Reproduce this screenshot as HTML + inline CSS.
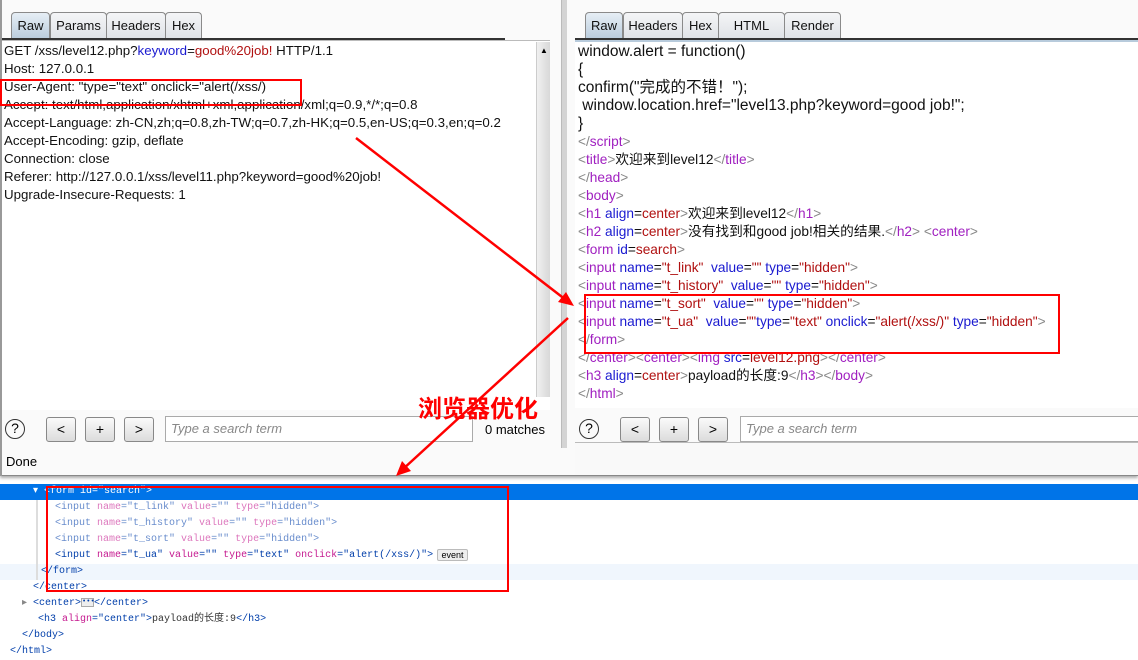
<!DOCTYPE html>
<html><head><meta charset="utf-8"><style>
*{margin:0;padding:0;box-sizing:border-box}
body{width:1138px;height:652px;overflow:hidden;background:#fff;position:relative;font-family:"Liberation Sans","Noto Sans CJK SC",sans-serif;}
.abs{position:absolute}
.tab{position:absolute;top:12px;height:27px;border:1px solid #8a8a8a;border-bottom:none;border-radius:4px 4px 0 0;background:linear-gradient(#f4f5f7,#dfe2e6);font-size:13px;line-height:26px;text-align:center;color:#111}
.tab.sel{background:linear-gradient(#e6eef5,#b8cbdc);top:12px;height:28px}
.line{position:absolute;left:0;white-space:pre;font-size:13.3px;line-height:18px;color:#111}
.r .line{font-size:13.7px}
.r .js{font-size:15.5px}
.tg{color:#a020c0}.br{color:#888}.at{color:#1a1ad0}.vl{color:#b01010}
.btn{position:absolute;width:30px;height:25px;border:1px solid #888;border-radius:3px;background:linear-gradient(#fafafa,#dcdcdc);font-size:14px;text-align:center;line-height:23px}
.q{position:absolute;width:20px;height:20px;border:1.5px solid #333;border-radius:50%;font-size:14px;text-align:center;line-height:17px}
.srch{position:absolute;height:26px;border:1px solid #aaa;background:#fff;font-style:italic;color:#888;font-size:13px;padding-left:5px;line-height:24px}
.dt{position:absolute;white-space:pre;font-family:"Liberation Mono","Noto Sans CJK SC",monospace;font-size:10px;line-height:16px;color:#003eaa}
.dt .n{color:#c5198f}.dt .v{color:#1a1aa6}
.dim{opacity:.6}
.red{position:absolute;border:2px solid #f00}
</style></head><body>
<div class="abs" style="left:0;top:0;width:1138px;height:476px;background:#fafafa;border-bottom:1px solid #888;box-shadow:0 2px 3px #aaa"></div>
<div class="abs" style="left:0;top:0;width:2px;height:476px;background:#999"></div>
<div class="tab sel" style="left:11px;width:39px">Raw</div>
<div class="tab" style="left:50px;width:57px">Params</div>
<div class="tab" style="left:106px;width:60px">Headers</div>
<div class="tab" style="left:165px;width:37px">Hex</div>
<div class="abs" style="left:2px;top:38px;width:503px;height:2px;background:#333"></div>
<div class="abs" style="left:2px;top:40px;width:548px;height:370px;background:#fff;border-top:1px solid #bbb"></div>
<div class="abs" style="left:536px;top:42px;width:14px;height:355px;background:linear-gradient(90deg,#f0f0f0,#d8d8d8);border-left:1px solid #ccc"></div>
<div class="abs" style="left:540px;top:46px;font-size:8px">▲</div>
<div class="abs" style="left:2px;top:42px;width:530px;height:360px">
<div class="line" style="top:0;left:2px">GET /xss/level12.php?<span class="at">keyword</span>=<span class="vl">good%20job!</span> HTTP/1.1</div>
<div class="line" style="top:18px;left:2px">Host: 127.0.0.1</div>
<div class="line" style="top:36px;left:2px">User-Agent: "type="text" onclick="alert(/xss/)</div>
<div class="line" style="top:54px;left:2px">Accept: text/html,application/xhtml+xml,application/xml;q=0.9,*/*;q=0.8</div>
<div class="line" style="top:72px;left:2px">Accept-Language: zh-CN,zh;q=0.8,zh-TW;q=0.7,zh-HK;q=0.5,en-US;q=0.3,en;q=0.2</div>
<div class="line" style="top:90px;left:2px">Accept-Encoding: gzip, deflate</div>
<div class="line" style="top:108px;left:2px">Connection: close</div>
<div class="line" style="top:126px;left:2px">Referer: http://127.0.0.1/xss/level11.php?keyword=good%20job!</div>
<div class="line" style="top:144px;left:2px">Upgrade-Insecure-Requests: 1</div>
</div>
<div class="red" style="left:0;top:79px;width:302px;height:27px"></div>
<div class="abs" style="left:561px;top:0;width:6px;height:448px;background:#d4d4d4;border-left:1px solid #bbb"></div>
<div class="q" style="left:5px;top:419px">?</div>
<div class="btn" style="left:46px;top:417px">&lt;</div>
<div class="btn" style="left:85px;top:417px">+</div>
<div class="btn" style="left:124px;top:417px">&gt;</div>
<div class="srch" style="left:165px;top:416px;width:308px">Type a search term</div>
<div class="abs" style="left:485px;top:422px;font-size:13px">0 matches</div>
<div class="abs" style="left:6px;top:454px;font-size:13px">Done</div>
<div class="tab sel" style="left:585px;width:38px">Raw</div>
<div class="tab" style="left:623px;width:60px">Headers</div>
<div class="tab" style="left:682px;width:37px">Hex</div>
<div class="tab" style="left:718px;width:67px">HTML</div>
<div class="tab" style="left:784px;width:57px">Render</div>
<div class="abs" style="left:575px;top:38px;width:563px;height:2px;background:#333"></div>
<div class="abs" style="left:575px;top:40px;width:563px;height:368px;background:#fff;border-top:2px solid #b8cbdc"></div>
<div class="abs r" style="left:578px;top:43px;width:560px;height:360px">
<div class="line js" style="top:0">window.alert = function()</div>
<div class="line js" style="top:18px">{</div>
<div class="line js" style="top:36px">confirm("完成的不错！");</div>
<div class="line js" style="top:54px"> window.location.href="level13.php?keyword=good job!";</div>
<div class="line js" style="top:72px">}</div>
<div class="line" style="top:90px"><span class="br">&lt;/</span><span class="tg">script</span><span class="br">&gt;</span></div>
<div class="line" style="top:108px"><span class="br">&lt;</span><span class="tg">title</span><span class="br">&gt;</span>欢迎来到level12<span class="br">&lt;/</span><span class="tg">title</span><span class="br">&gt;</span></div>
<div class="line" style="top:126px"><span class="br">&lt;/</span><span class="tg">head</span><span class="br">&gt;</span></div>
<div class="line" style="top:144px"><span class="br">&lt;</span><span class="tg">body</span><span class="br">&gt;</span></div>
<div class="line" style="top:162px"><span class="br">&lt;</span><span class="tg">h1</span> <span class="at">align</span>=<span class="vl">center</span><span class="br">&gt;</span>欢迎来到level12<span class="br">&lt;/</span><span class="tg">h1</span><span class="br">&gt;</span></div>
<div class="line" style="top:180px"><span class="br">&lt;</span><span class="tg">h2</span> <span class="at">align</span>=<span class="vl">center</span><span class="br">&gt;</span>没有找到和good job!相关的结果.<span class="br">&lt;/</span><span class="tg">h2</span><span class="br">&gt;</span> <span class="br">&lt;</span><span class="tg">center</span><span class="br">&gt;</span></div>
<div class="line" style="top:198px"><span class="br">&lt;</span><span class="tg">form</span> <span class="at">id</span>=<span class="vl">search</span><span class="br">&gt;</span></div>
<div class="line" style="top:216px"><span class="br">&lt;</span><span class="tg">input</span> <span class="at">name</span>=<span class="vl">"t_link"</span>  <span class="at">value</span>=<span class="vl">""</span> <span class="at">type</span>=<span class="vl">"hidden"</span><span class="br">&gt;</span></div>
<div class="line" style="top:234px"><span class="br">&lt;</span><span class="tg">input</span> <span class="at">name</span>=<span class="vl">"t_history"</span>  <span class="at">value</span>=<span class="vl">""</span> <span class="at">type</span>=<span class="vl">"hidden"</span><span class="br">&gt;</span></div>
<div class="line" style="top:252px"><span class="br">&lt;</span><span class="tg">input</span> <span class="at">name</span>=<span class="vl">"t_sort"</span>  <span class="at">value</span>=<span class="vl">""</span> <span class="at">type</span>=<span class="vl">"hidden"</span><span class="br">&gt;</span></div>
<div class="line" style="top:270px"><span class="br">&lt;</span><span class="tg">input</span> <span class="at">name</span>=<span class="vl">"t_ua"</span>  <span class="at">value</span>=<span class="vl">""</span><span class="at">type</span>=<span class="vl">"text"</span> <span class="at">onclick</span>=<span class="vl">"alert(/xss/)"</span> <span class="at">type</span>=<span class="vl">"hidden"</span><span class="br">&gt;</span></div>
<div class="line" style="top:288px"><span class="br">&lt;/</span><span class="tg">form</span><span class="br">&gt;</span></div>
<div class="line" style="top:306px"><span class="br">&lt;/</span><span class="tg">center</span><span class="br">&gt;</span><span class="br">&lt;</span><span class="tg">center</span><span class="br">&gt;</span><span class="br">&lt;</span><span class="tg">img</span> <span class="at">src</span>=<span class="vl">level12.png</span><span class="br">&gt;</span><span class="br">&lt;/</span><span class="tg">center</span><span class="br">&gt;</span></div>
<div class="line" style="top:324px"><span class="br">&lt;</span><span class="tg">h3</span> <span class="at">align</span>=<span class="vl">center</span><span class="br">&gt;</span>payload的长度:9<span class="br">&lt;/</span><span class="tg">h3</span><span class="br">&gt;</span><span class="br">&lt;/</span><span class="tg">body</span><span class="br">&gt;</span></div>
<div class="line" style="top:342px"><span class="br">&lt;/</span><span class="tg">html</span><span class="br">&gt;</span></div>
</div>
<div class="red" style="left:584px;top:294px;width:476px;height:60px"></div>
<div class="q" style="left:579px;top:419px">?</div>
<div class="btn" style="left:620px;top:417px">&lt;</div>
<div class="btn" style="left:659px;top:417px">+</div>
<div class="btn" style="left:698px;top:417px">&gt;</div>
<div class="srch" style="left:740px;top:416px;width:400px">Type a search term</div>
<div class="abs" style="left:575px;top:442px;width:563px;height:34px;background:#f9f9f9;border-top:1px solid #bbb;border-bottom:1px solid #888"></div>
<div class="abs" style="left:0;top:484px;width:1138px;height:16px;background:#0074e8"></div>
<div class="abs" style="left:0;top:564px;width:1138px;height:16px;background:#f0f6fd"></div>
<div class="abs" style="left:36px;top:500px;width:2px;height:80px;background:#ddd"></div>
<div class="dt" style="left:33px;top:484px;color:#fff">▾ &lt;form id="search"&gt;</div>
<div class="dt dim" style="left:55px;top:500px">&lt;input <span class="n">name</span>="t_link" <span class="n">value</span>="" <span class="n">type</span>="hidden"&gt;</div>
<div class="dt dim" style="left:55px;top:516px">&lt;input <span class="n">name</span>="t_history" <span class="n">value</span>="" <span class="n">type</span>="hidden"&gt;</div>
<div class="dt dim" style="left:55px;top:532px">&lt;input <span class="n">name</span>="t_sort" <span class="n">value</span>="" <span class="n">type</span>="hidden"&gt;</div>
<div class="dt" style="left:55px;top:548px">&lt;input <span class="n">name</span>="t_ua" <span class="n">value</span>="" <span class="n">type</span>="text" <span class="n">onclick</span>="alert(/xss/)"&gt;</div>
<div class="abs" style="left:437px;top:549px;width:31px;height:12px;border:1px solid #bbb;border-radius:2px;background:#eee;font-size:9px;line-height:10px;text-align:center">event</div>
<div class="dt" style="left:41px;top:564px">&lt;/form&gt;</div>
<div class="dt" style="left:33px;top:580px">&lt;/center&gt;</div>
<div class="dt" style="left:22px;top:596px"><span style="color:#888">▸</span> &lt;center&gt;<span style="display:inline-block;width:13px;height:9px;border:1px solid #aaa;background:#eee;font-size:7px;line-height:6px;vertical-align:middle;text-align:center">•••</span>&lt;/center&gt;</div>
<div class="dt" style="left:38px;top:612px">&lt;h3 <span class="n">align</span>="center"&gt;<span style="color:#333">payload的长度:9</span>&lt;/h3&gt;</div>
<div class="dt" style="left:22px;top:628px">&lt;/body&gt;</div>
<div class="dt" style="left:10px;top:644px">&lt;/html&gt;</div>
<div class="red" style="left:46px;top:486px;width:463px;height:106px"></div>
<div class="abs" style="left:418px;top:392px;font-size:24px;font-weight:bold;color:#f00;font-family:'Noto Sans CJK SC',sans-serif;line-height:30px">浏览器优化</div>
<svg class="abs" style="left:0;top:0" width="1138" height="652">
<g stroke="#f00" stroke-width="2.5" fill="#f00">
<line x1="356" y1="138" x2="566" y2="300"/>
<polygon points="574,306 558,302 566,292" stroke="none"/>
<line x1="568" y1="318" x2="402" y2="470"/>
<polygon points="396,476 402,461 411,471" stroke="none"/>
</g>
</svg>
</body></html>
